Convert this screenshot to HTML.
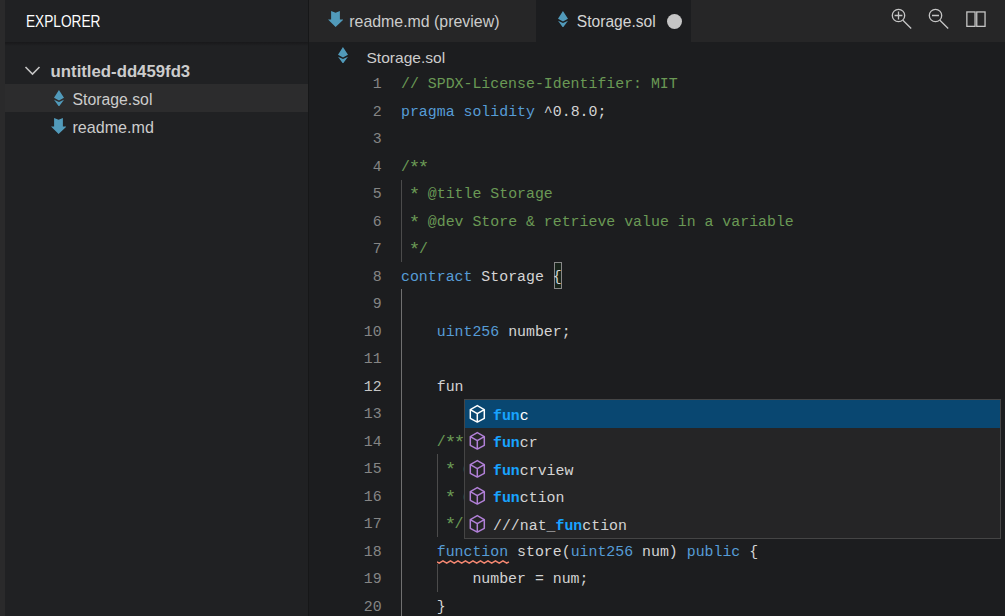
<!DOCTYPE html>
<html><head><meta charset="utf-8">
<style>
*{margin:0;padding:0;box-sizing:border-box}
html,body{width:1005px;height:616px;overflow:hidden;background:#1c1d1f}
body{position:relative;font-family:"Liberation Sans",sans-serif;color:#cccccc}
.abs{position:absolute}
#strip{left:0;top:0;width:5px;height:616px;background:#2a2a2b}
#side{left:5px;top:0;width:303px;height:616px;background:#202123}
#sep{left:308px;top:0;width:1px;height:616px;background:#161718}
#shadow{left:5px;top:42px;width:303px;height:4px;background:linear-gradient(#18181a,rgba(32,33,35,0))}
.t{position:absolute;white-space:pre;line-height:1}
#tabs{left:309px;top:0;width:696px;height:42px;background:#262627}
#tab2{left:536px;top:0;width:155px;height:42px;background:#1c1d1f}
#selrow{left:5px;top:84px;width:303px;height:28px;background:#2c2c2d}
.code{position:absolute;left:401px;font-family:"Liberation Mono",monospace;font-size:14.88px;white-space:pre;line-height:27.5px;height:27.5px;color:#d4d4d4}
.ln{position:absolute;left:330.7px;width:51px;text-align:right;font-family:"Liberation Mono",monospace;font-size:14.88px;line-height:27.5px;height:27.5px;color:#858585}
.act{color:#c6c6c6}
.c{color:#6a9955}
.ast{font-style:normal;display:inline-block;transform:translateY(1.5px) scale(1.28)}.k{color:#569cd6}
.guide{position:absolute;width:1px;background:#404040}
#sug{left:464px;top:399px;width:537px;height:140px;background:#252526;border:1px solid #454545}
.srow{position:absolute;left:0;width:535px;height:27.5px}
.stxt{position:absolute;left:28px;top:2.5px;font-family:"Liberation Mono",monospace;font-size:14.88px;line-height:27.5px;white-space:pre;color:#d4d4d4}
.hl{color:#18a3ff;font-weight:bold}
</style></head><body>
<div class="abs" id="strip"></div>
<div class="abs" id="side"></div>
<div class="abs" id="sep"></div>
<div class="abs" id="shadow"></div>
<div class="t" style="left:25.5px;top:13.7px;font-size:15.6px;color:#ffffff;transform:scaleX(0.877);transform-origin:0 0">EXPLORER</div>
<div class="abs" id="selrow"></div>
<!-- chevron -->
<svg class="abs" style="left:24px;top:64px" width="18" height="14" viewBox="0 0 18 14"><path d="M1.5 3 L8.5 10 L15.5 3" fill="none" stroke="#c5c5c5" stroke-width="1.6"/></svg>
<div class="t" style="left:50.6px;top:64.3px;font-size:16.75px;font-weight:bold;color:#cccccc">untitled-dd459fd3</div>
<div class="t" style="left:72.5px;top:92.3px;font-size:15.8px;color:#cccccc">Storage.sol</div>
<div class="t" style="left:72.5px;top:119.3px;font-size:16.1px;color:#cccccc">readme.md</div>

<div class="abs" id="tabs"></div>
<div class="abs" id="tab2"></div>
<svg width="0" height="0" style="position:absolute">
<defs>
<symbol id="eth" viewBox="0 0 10.2 16.6"><path d="M4.95 0 L10.1 7.8 L5 10.5 L0 7.8 Z M0 9.7 L5 11.9 L10.1 9.6 L4.95 16.6 Z" fill="#519aba"/></symbol>
<symbol id="md" viewBox="0 0 15.4 16"><path d="M3.1 0 L7.6 1.75 L11.9 0 L11.9 8.6 L15.4 8.6 L7.6 16 L0 8.6 L3.1 8.6 Z" fill="#519aba"/></symbol>
<symbol id="cube" viewBox="0 0 19 21"><path d="M9.3 2.6 L2.3 6.6 L2.3 15.3 L9.3 19.1 L16.3 15.3 L16.3 6.6 Z M2.3 6.6 L9.3 10.6 L16.3 6.6 M9.3 10.6 L9.3 19.1" fill="none" stroke-width="1.5" stroke-linejoin="round"/></symbol>
</defs></svg>
<svg class="abs" style="left:53.9px;top:89.7px" width="10.2" height="16.6"><use href="#eth"/></svg>
<svg class="abs" style="left:50.9px;top:117.9px" width="15.4" height="16"><use href="#md"/></svg>
<svg class="abs" style="left:327.5px;top:11.1px" width="15.4" height="16"><use href="#md"/></svg>
<svg class="abs" style="left:557.9px;top:10.9px" width="10.2" height="16.6"><use href="#eth"/></svg>
<svg class="abs" style="left:337.8px;top:46.8px" width="10.2" height="16.6"><use href="#eth"/></svg>
<!-- zoom in -->
<svg class="abs" style="left:885px;top:4px" width="30" height="30" viewBox="885 4 30 30" fill="none" stroke="#c5c5c5" stroke-width="1.3">
<circle cx="898.5" cy="15.5" r="6.2"/><path d="M902.9 20.2 L911.2 28.5 M894.6 15.5 H902.4 M898.5 11.6 V19.4"/></svg>
<svg class="abs" style="left:922px;top:4px" width="30" height="30" viewBox="922 4 30 30" fill="none" stroke="#c5c5c5" stroke-width="1.3">
<circle cx="935.5" cy="15.5" r="6.2"/><path d="M939.9 20.2 L948.2 28.5 M932 15.5 H939"/></svg>
<svg class="abs" style="left:960px;top:4px" width="32" height="30" viewBox="960 4 32 30" fill="none" stroke="#c5c5c5" stroke-width="1.3">
<rect x="966.85" y="11.95" width="8.2" height="14.4"/><rect x="976.75" y="11.95" width="8.3" height="14.4"/></svg>

<div class="t" style="left:349.3px;top:13.6px;font-size:15.9px;color:#cccccc">readme.md (preview)</div>
<div class="t" style="left:576.8px;top:13.6px;font-size:15.6px;color:#d4d4d4">Storage.sol</div>
<div class="abs" style="left:667px;top:14px;width:15px;height:15px;border-radius:50%;background:#c5c5c5"></div>

<div class="t" style="left:366.5px;top:50px;font-size:15.55px;color:#cccccc">Storage.sol</div>


<div class="guide" style="left:401px;top:179.5px;height:82.5px;background:#4b4b4b"></div>
<div class="guide" style="left:401px;top:289px;height:327px;background:#707070"></div>
<div class="guide" style="left:437px;top:454px;height:82.5px;background:#4b4b4b"></div>
<div class="guide" style="left:437px;top:564px;height:27.5px;background:#4b4b4b"></div>
<div class="abs" style="left:554px;top:262px;width:8px;height:27px;border:1px solid #888888;background:rgba(0,100,0,0.1)"></div>
<svg class="abs" style="left:437px;top:557px" width="73" height="9" viewBox="0 0 73 9"><path d="M0.00 4.80 L2.20 6.20 L5.95 3.80 L9.70 6.20 L13.45 3.80 L17.20 6.20 L20.95 3.80 L24.70 6.20 L28.45 3.80 L32.20 6.20 L35.95 3.80 L39.70 6.20 L43.45 3.80 L47.20 6.20 L50.95 3.80 L54.70 6.20 L58.45 3.80 L62.20 6.20 L65.95 3.80 L69.70 6.20 L71.90 4.80" fill="none" stroke="#f48771" stroke-width="1.5"/></svg>
<div id="lines">
<!--LINES-->
<div class="ln" style="top:71.0px">1</div>
<div class="code" style="top:71.0px"><span class="c">// SPDX-License-Identifier: MIT</span></div>
<div class="ln" style="top:98.5px">2</div>
<div class="code" style="top:98.5px"><span class="k">pragma</span> <span class="k">solidity</span> ^0.8.0;</div>
<div class="ln" style="top:126.0px">3</div>
<div class="ln" style="top:153.5px">4</div>
<div class="code" style="top:153.5px"><span class="c">/<i class="ast">*</i><i class="ast">*</i></span></div>
<div class="ln" style="top:181.0px">5</div>
<div class="code" style="top:181.0px"><span class="c"> <i class="ast">*</i> @title Storage</span></div>
<div class="ln" style="top:208.5px">6</div>
<div class="code" style="top:208.5px"><span class="c"> <i class="ast">*</i> @dev Store &amp; retrieve value in a variable</span></div>
<div class="ln" style="top:236.0px">7</div>
<div class="code" style="top:236.0px"><span class="c"> <i class="ast">*</i>/</span></div>
<div class="ln" style="top:263.5px">8</div>
<div class="code" style="top:263.5px"><span class="k">contract</span> Storage <span class="br">{</span></div>
<div class="ln" style="top:291.0px">9</div>
<div class="ln" style="top:318.5px">10</div>
<div class="code" style="top:318.5px">    <span class="k">uint256</span> number;</div>
<div class="ln" style="top:346.0px">11</div>
<div class="ln act" style="top:373.5px">12</div>
<div class="code" style="top:373.5px">    fun</div>
<div class="ln" style="top:401.0px">13</div>
<div class="ln" style="top:428.5px">14</div>
<div class="code" style="top:428.5px">    <span class="c">/<i class="ast">*</i><i class="ast">*</i></span></div>
<div class="ln" style="top:456.0px">15</div>
<div class="code" style="top:456.0px">    <span class="c"> <i class="ast">*</i> @dev Store value in variable</span></div>
<div class="ln" style="top:483.5px">16</div>
<div class="code" style="top:483.5px">    <span class="c"> <i class="ast">*</i> @param num value to store</span></div>
<div class="ln" style="top:511.0px">17</div>
<div class="code" style="top:511.0px">    <span class="c"> <i class="ast">*</i>/</span></div>
<div class="ln" style="top:538.5px">18</div>
<div class="code" style="top:538.5px">    <span class="k sq">function</span> store(<span class="k">uint256</span> num) <span class="k">public</span> {</div>
<div class="ln" style="top:566.0px">19</div>
<div class="code" style="top:566.0px">        number = num;</div>
<div class="ln" style="top:593.5px">20</div>
<div class="code" style="top:593.5px">    }</div>
<!--/LINES-->
</div>

<div class="abs" id="sug">
 <div class="srow" style="top:0.0px;background:#094771;"><svg style="position:absolute;left:3.4px;top:2.7px" width="19" height="21" stroke="#ffffff"><use href="#cube"/></svg><div class="stxt" style="color:#ffffff"><span class="hl">fun</span>c</div></div>
 <div class="srow" style="top:27.5px;"><svg style="position:absolute;left:3.4px;top:2.7px" width="19" height="21" stroke="#b180d7"><use href="#cube"/></svg><div class="stxt"><span class="hl">fun</span>cr</div></div>
 <div class="srow" style="top:55.0px;"><svg style="position:absolute;left:3.4px;top:2.7px" width="19" height="21" stroke="#b180d7"><use href="#cube"/></svg><div class="stxt"><span class="hl">fun</span>crview</div></div>
 <div class="srow" style="top:82.5px;"><svg style="position:absolute;left:3.4px;top:2.7px" width="19" height="21" stroke="#b180d7"><use href="#cube"/></svg><div class="stxt"><span class="hl">fun</span>ction</div></div>
 <div class="srow" style="top:110.0px;"><svg style="position:absolute;left:3.4px;top:2.7px" width="19" height="21" stroke="#b180d7"><use href="#cube"/></svg><div class="stxt">///nat_<span class="hl">fun</span>ction</div></div>
</div>
</body></html>
